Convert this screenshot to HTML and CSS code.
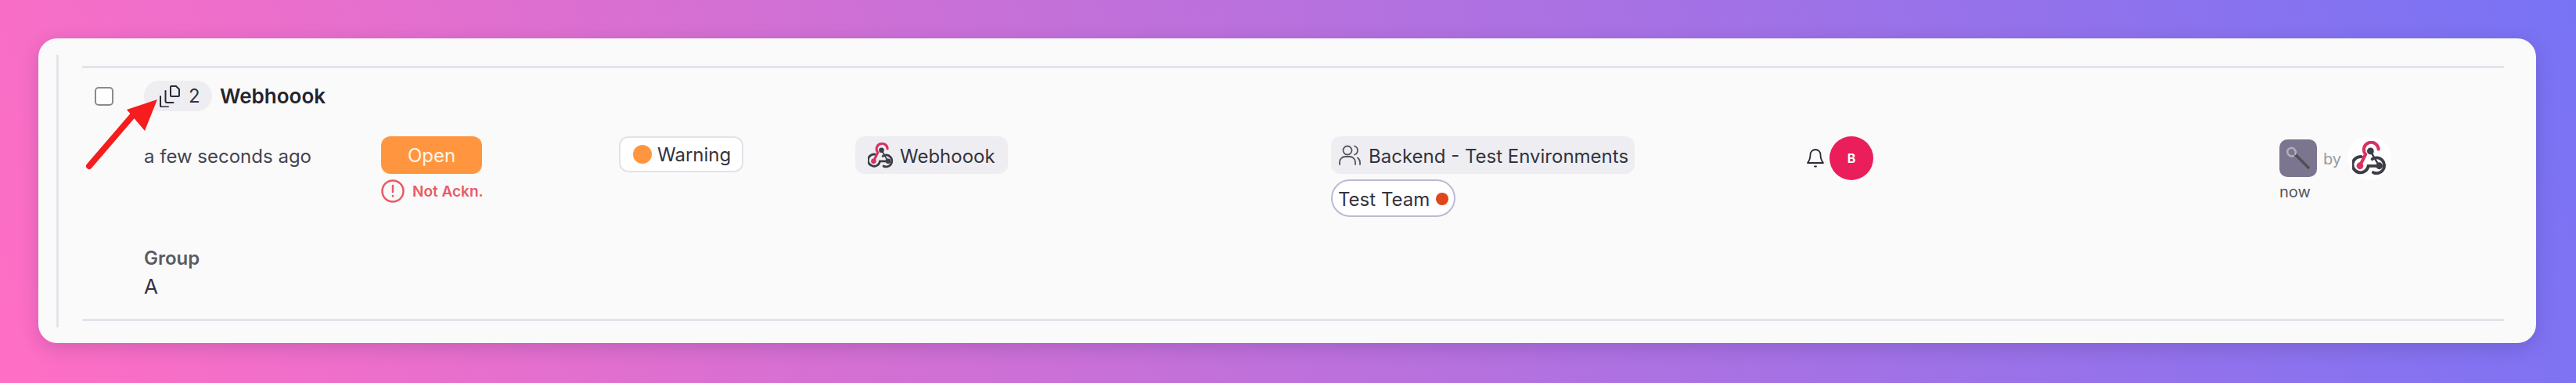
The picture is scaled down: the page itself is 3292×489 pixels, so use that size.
FILE: index.html
```html
<!DOCTYPE html>
<html lang="en">
<head>
    <meta charset="UTF-8">
    <title>Alert row</title>
    <link rel="stylesheet" href="styles.css">
</head>
<body>
    <svg class="defs" width="0" height="0">
        <symbol id="webhook" viewBox="0 0 32 32" fill="none" stroke-linecap="round">
            <path d="M8.6 14.6A7.4 7.4 0 1 0 15 23.2H25" stroke="#3d3d47" stroke-width="2.8"/>
            <path d="M18.6 16.8A7.2 7.2 0 1 1 19.5 29.2" stroke="#3d3d47" stroke-width="2.8"/>
            <path d="M17 9.5L25 23" stroke="#3d3d47" stroke-width="1.8"/>
            <path d="M7.2 23L12.4 12.4A6.8 6.8 0 1 1 24.4 7.6" stroke="#d9325f" stroke-width="3"/>
            <circle cx="17" cy="9.4" r="3.2" fill="#3d3d47"/>
            <circle cx="25.2" cy="23.1" r="3.2" fill="#3d3d47"/>
            <circle cx="7.2" cy="23.1" r="3.2" fill="#d9325f"/>
        </symbol>
    </svg>

    <div class="card">
        <div class="group-rail">
            <div class="alert-row">
                <div class="alert-title">
                    <span class="checkbox"></span>
                    <span class="count-pill">
                        <svg class="copy-icon" viewBox="0 0 26 28" fill="none" stroke="#2b2b36" stroke-width="2" stroke-linecap="round" stroke-linejoin="round">
                            <path d="M15 1h6l4 4v8a1 1 0 0 1-1 1h-9a1 1 0 0 1-1-1V2a1 1 0 0 1 1-1z"/>
                            <path d="M7.5 7v13a2 2 0 0 0 2 2h8"/>
                            <path d="M1 14v11.500a2 2 0 0 0 2 2h8"/>
                        </svg>
                        2
                    </span>
                    <span class="alert-name">Webhoook</span>
                </div>

                <div class="alert-cols">
                    <div class="time-ago">a few seconds ago</div>
                    <div>
                        <span class="status-btn">Open</span>
                        <div class="ack-note">
                            <svg class="ack-icon" viewBox="0 0 30 30" fill="none" stroke="#ea5a64" stroke-width="2.500" stroke-linecap="round">
                                <circle cx="15" cy="15" r="13.500"/>
                                <path d="M15 8v8"/>
                                <path d="M15 21v.5"/>
                            </svg>
                            Not Ackn.
                        </div>
                    </div>
                    <div>
                        <span class="pill pill-outline"><span class="dot dot-warning"></span>Warning</span>
                    </div>
                    <div>
                        <span class="pill pill-grey">
                            <svg class="pill-icon"><use href="#webhook"/></svg>
                            Webhoook
                        </span>
                    </div>
                    <div class="team-col">
                        <span class="pill pill-grey">
                            <svg class="users-icon" viewBox="0 0 28 28" fill="none" stroke="#55555f" stroke-width="1.800" stroke-linecap="round">
                                <circle cx="11" cy="8" r="5.500"/>
                                <path d="M1 26v-3a7 7 0 0 1 7-7h6a7 7 0 0 1 7 7v3"/>
                                <path d="M20 2.500a5.800 5.800 0 0 1 0 11"/>
                                <path d="M27 26v-3a7 7 0 0 0-3-5.500"/>
                            </svg>
                            Backend - Test Environments
                        </span>
                        <span class="pill team-pill">Test Team<span class="dot dot-team"></span></span>
                    </div>
                    <div class="assignee-col">
                        <svg class="bell-icon" viewBox="0 0 22 24" fill="none" stroke="#2b2b36" stroke-width="1.800" stroke-linecap="round" stroke-linejoin="round">
                            <path d="M11 1a6.500 6.500 0 0 0-6.500 6.500c0 6-3.500 10.500-3.500 10.500h20s-3.500-4.500-3.500-10.500A6.500 6.500 0 0 0 11 1z"/>
                            <path d="M10 22.500h2"/>
                        </svg>
                        <span class="avatar">B</span>
                    </div>
                    <div>
                        <div class="source-line">
                            <span class="tool-tile">
                                <svg class="wrench-icon" viewBox="0 0 48 48" fill="none" stroke-linecap="round">
                                    <path d="M20 19L37 36" stroke="#4f4f56" stroke-width="3.500"/>
                                    <path d="M12 12a5.500 5.500 0 0 0 6 9M20 19a5.500 5.500 0 0 0-6-8" stroke="#b0aebc" stroke-width="2.500"/>
                                </svg>
                            </span>
                            <span class="by-text">by</span>
                            <span class="source-circle"><svg class="source-icon"><use href="#webhook"/></svg></span>
                        </div>
                        <div class="now-text">now</div>
                    </div>
                </div>

                <div class="extra-field">
                    <div class="field-label">Group</div>
                    <div class="field-value">A</div>
                </div>
            </div>
        </div>
    </div>

    <svg class="arrow" viewBox="0 0 110 100" fill="none">
        <path d="M6 92L68 20" stroke="#f51d1d" stroke-width="8" stroke-linecap="round"/>
        <path d="M93 7L54 20L77 47z" fill="#f51d1d"/>
    </svg>
</body>
</html>
```

FILE: styles.css
```css
* {
    box-sizing: border-box;
}

html, body {
    height: 489px;
}

body {
    position: relative;
    margin: 0;
    padding: 49px 51px 51px 49px;
    overflow: hidden;
    font-family: 'Inter', 'Liberation Sans', sans-serif;
    font-size: 24px;
    color: #33333f;
    background: linear-gradient(70deg, #ff6ec4, #7873f5);
}

.defs {
    position: absolute;
}

.card {
    height: 389px;
    padding: 21px 41px 20px 23px;
    background: #fafafa;
    border-radius: 24px;
    box-shadow: 0 6px 24px rgba(40, 20, 80, 0.18);
}

.group-rail {
    height: 100%;
    padding: 14px 0 8px 30px;
    border-left: 3px solid #e3e3ea;
}

.alert-row {
    height: 100%;
    padding-top: 16px;
    border-top: 3px solid #e3e3ea;
    border-bottom: 3px solid #e3e3ea;
}

.alert-title {
    display: flex;
    align-items: center;
    height: 39px;
    padding-left: 16px;
}

.checkbox {
    width: 24px;
    height: 24px;
    margin-right: 39px;
    background: #fff;
    border: 2px solid #8a8a92;
    border-radius: 5px;
}

.count-pill {
    display: flex;
    align-items: center;
    gap: 11px;
    width: 87px;
    height: 39px;
    padding-left: 20px;
    background: #eeeef2;
    border-radius: 20px;
}

.copy-icon {
    width: 26px;
    height: 28px;
}

.alert-name {
    margin-left: 10px;
    font-size: 26px;
    font-weight: 600;
    color: #24242e;
}

.alert-cols {
    display: grid;
    grid-template-columns: 303px 304px 302px 608px 608px 604px 1fr;
    margin-top: 32px;
    padding-left: 79px;
}

.time-ago {
    padding-top: 11px;
    color: #44444f;
}

.status-btn {
    display: flex;
    align-items: center;
    justify-content: center;
    width: 129px;
    height: 48px;
    color: #fff5ea;
    background: #ff963f;
    border-radius: 12px;
}

.ack-note {
    display: flex;
    align-items: center;
    gap: 10px;
    margin-top: 7px;
    font-size: 19px;
    font-weight: 600;
    color: #ea5a64;
}

.ack-icon {
    width: 30px;
    height: 30px;
}

.pill {
    display: inline-flex;
    align-items: center;
    height: 48px;
    padding-top: 2px;
    border-radius: 12px;
}

.pill-outline {
    gap: 7px;
    padding: 0 14px 0 16px;
    height: 46px;
    background: #fff;
    border: 2px solid #e2e2ea;
}

.pill-grey {
    gap: 8px;
    padding: 2px 16px 0;
    background: #eeeef2;
}

.pill-icon {
    width: 33px;
    height: 33px;
    margin-top: -2px;
}

.users-icon {
    width: 28px;
    height: 28px;
    margin-top: -2px;
    margin-left: -6px;
    margin-right: 2px;
}

.team-col {
    display: flex;
    flex-direction: column;
    align-items: flex-start;
    gap: 7px;
}

.team-col .pill-grey {
    padding-right: 8px;
}

.team-pill {
    gap: 8px;
    padding: 2px 7px 0;
    background: #fff;
    border: 2px solid #bdb9d4;
    border-radius: 24px;
}

.dot {
    border-radius: 50%;
}

.dot-warning {
    width: 24px;
    height: 24px;
    background: #ff963f;
}

.dot-team {
    width: 16px;
    height: 16px;
    background: #e0461a;
}

.assignee-col {
    display: flex;
    align-items: center;
    gap: 7px;
    height: 56px;
}

.bell-icon {
    width: 22px;
    height: 24px;
}

.avatar {
    display: flex;
    align-items: center;
    justify-content: center;
    width: 56px;
    height: 56px;
    font-size: 16px;
    font-weight: 700;
    color: #fff;
    background: #e91e5a;
    border-radius: 50%;
}

.source-line {
    display: flex;
    align-items: center;
    gap: 8px;
    height: 56px;
}

.tool-tile {
    width: 48px;
    height: 48px;
    background: #7c7590;
    border-radius: 10px;
}

.wrench-icon {
    display: block;
    width: 48px;
    height: 48px;
}

.by-text {
    padding-top: 2px;
    font-size: 20px;
    color: #9a9aa2;
}

.source-circle {
    display: flex;
    align-items: center;
    justify-content: center;
    width: 56px;
    height: 56px;
    background: #fff;
    border-radius: 50%;
}

.source-icon {
    width: 44px;
    height: 44px;
}

.now-text {
    margin-top: 3px;
    font-size: 20px;
    color: #55555c;
}

.extra-field {
    margin-top: 38px;
    padding-left: 79px;
}

.field-label {
    font-size: 24px;
    font-weight: 600;
    color: #5a5a63;
}

.field-value {
    margin-top: 6px;
    font-size: 26px;
}

.arrow {
    position: absolute;
    left: 108px;
    top: 120px;
    width: 110px;
    height: 100px;
}
```
